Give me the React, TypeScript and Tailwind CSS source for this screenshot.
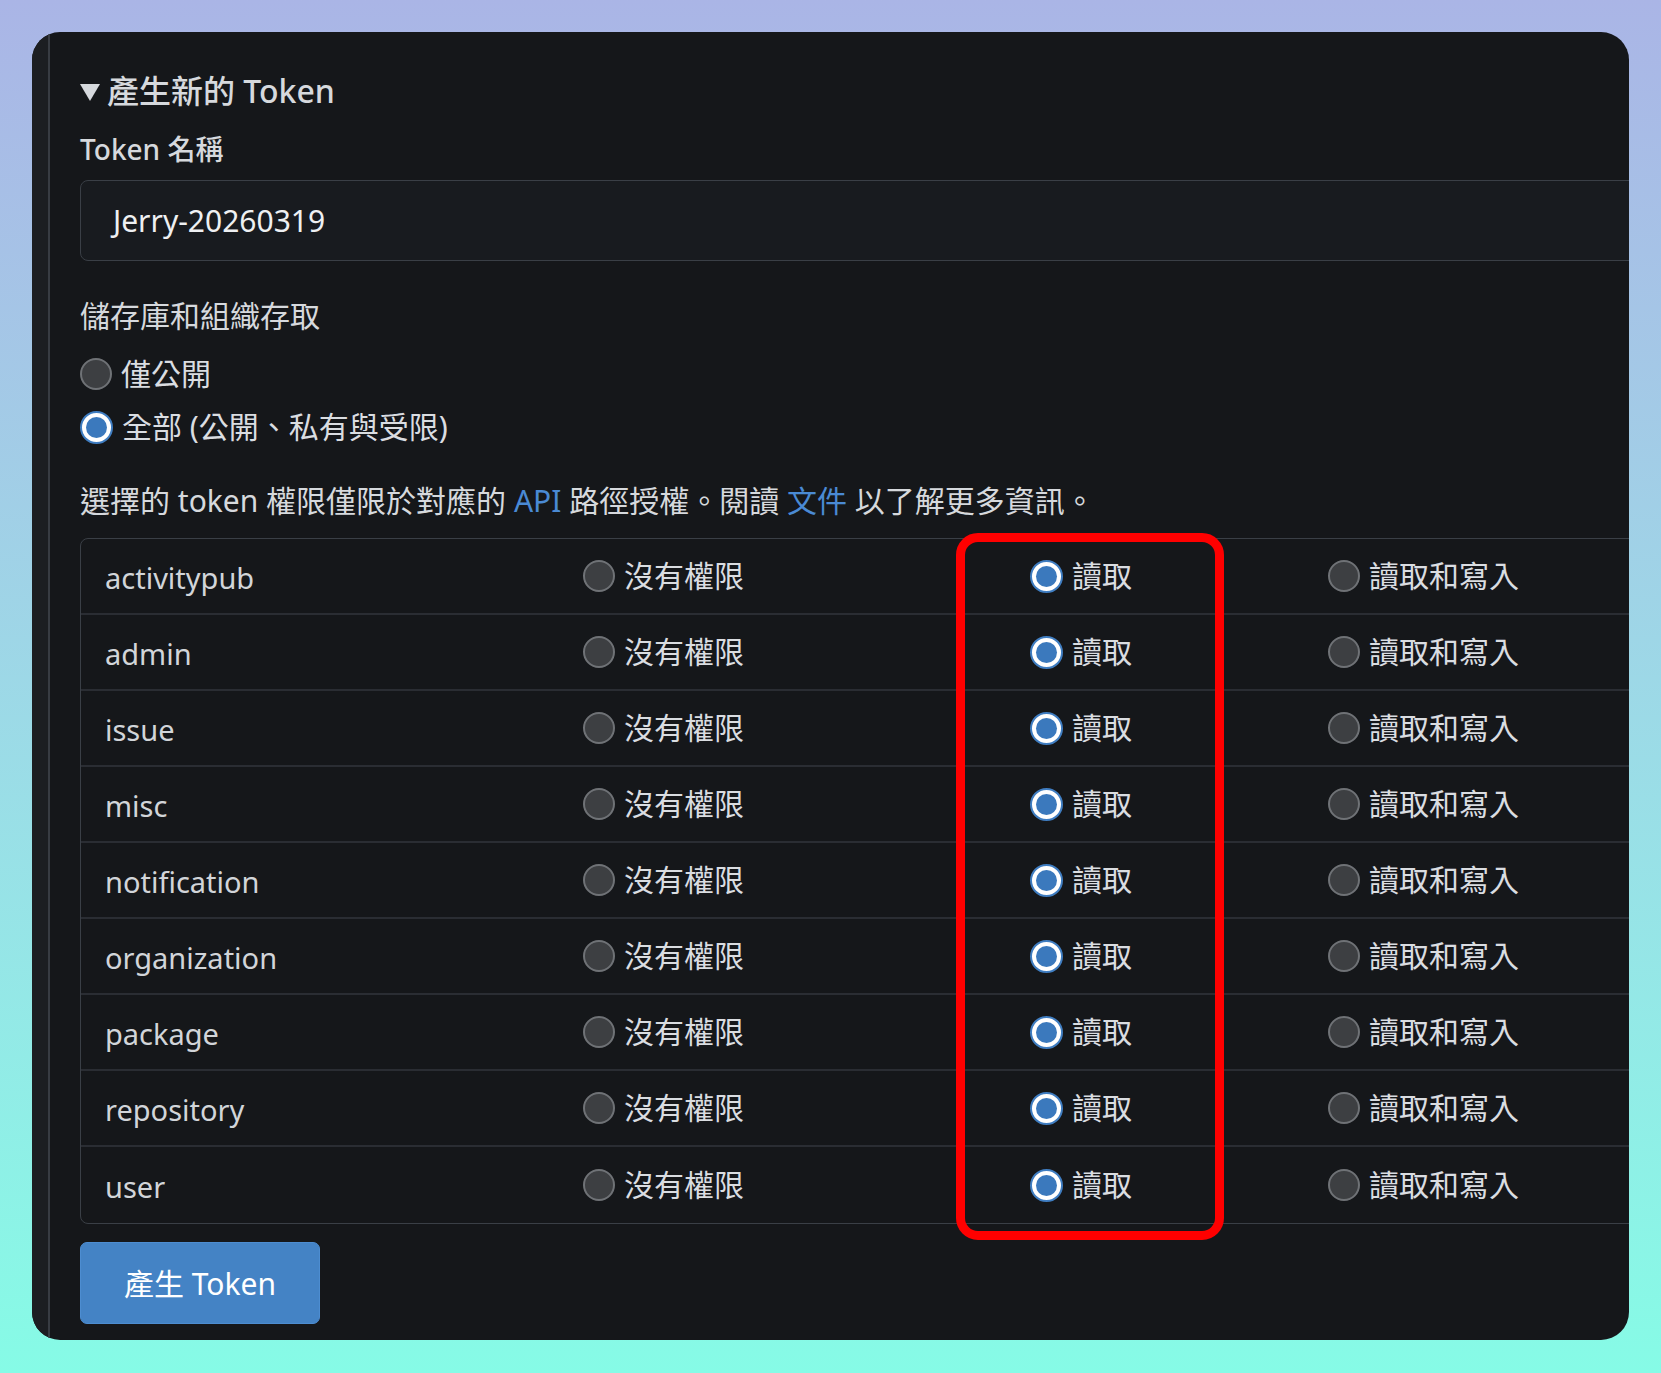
import React from "react";

type Level = "none" | "read" | "write";

const SCOPES: { name: string; level: Level }[] = [
  { name: "activitypub", level: "read" },
  { name: "admin", level: "read" },
  { name: "issue", level: "read" },
  { name: "misc", level: "read" },
  { name: "notification", level: "read" },
  { name: "organization", level: "read" },
  { name: "package", level: "read" },
  { name: "repository", level: "read" },
  { name: "user", level: "read" },
];

const FONT = "font-['Noto_Sans','Noto_Sans_CJK_TC',sans-serif]";

function Radio({ checked }: { checked: boolean }) {
  if (checked) {
    return (
      <span className="flex h-[33px] w-[33px] shrink-0 items-center justify-center rounded-full border-2 border-[#3f7dc1] bg-white">
        <span className="h-[21px] w-[21px] rounded-full bg-[#3b79bd]" />
      </span>
    );
  }
  return <span className="h-[32px] w-[32px] shrink-0 rounded-full border-2 border-[#6f7276] bg-[#3d3f42]" />;
}

function RadioLabel({ checked, label }: { checked: boolean; label: string }) {
  return (
    <label className="flex items-center gap-[9px] text-[30px] leading-[40px] text-[#dadde1]">
      <Radio checked={checked} />
      <span>{label}</span>
    </label>
  );
}

export default function App() {
  return (
    <div className={`min-h-[1373px] w-full bg-gradient-to-b from-[#aab5e6] to-[#86fbe6] pt-8 ${FONT}`}>
      <div className="relative ml-8 flex h-[1308px] w-[1597px] overflow-hidden rounded-[28px] bg-[#15171a]">
        {/* sidebar edge */}
        <div className="w-[18px] shrink-0 border-r-2 border-[#383c43] bg-[#1c1e22]" />

        <div className="w-[1720px] shrink-0 pl-[30px] pt-[37px]">
          <div className="flex h-[44px] items-center gap-[7px] text-[32px] font-medium text-[#d6d9dd]">
            <svg width="20" height="17" viewBox="0 0 20 17" className="mt-[2px]">
              <path d="M0 0 H20 L10 17 Z" fill="#d6d9dd" />
            </svg>
            <span>產生新的 Token</span>
          </div>

          <div className="mt-[16px] text-[28px] font-medium leading-[40px] text-[#d6d9dd]">Token 名稱</div>

          <div className="mt-[11px] flex h-[81px] items-center rounded-[8px] border-[1.5px] border-[#3a3f46] bg-[#181b1f] pl-[32px] text-[30px] text-[#eef0f2]">
            Jerry-20260319
          </div>

          <div className="mt-[35px] text-[30px] leading-[40px] text-[#d6d9dd]">儲存庫和組織存取</div>

          <div className="mt-[18px]">
            <RadioLabel checked={false} label="僅公開" />
          </div>
          <div className="mt-[13px]">
            <RadioLabel checked label="全部 (公開、私有與受限)" />
          </div>

          <p className="mt-[34px] text-[30px] leading-[40px] text-[#d6d9dd]">
            選擇的 token 權限僅限於對應的 <span className="text-[#4a8ad4]">API</span> 路徑授權。閱讀{" "}
            <span className="text-[#4a8ad4]">文件</span> 以了解更多資訊。
          </p>

          <div className="mt-[17px] overflow-hidden rounded-[8px] border border-[#3a3f46]">
            {SCOPES.map((s, i) => (
              <div
                key={s.name}
                className={`grid h-[76px] grid-cols-[502px_447px_298px_1fr] items-center ${
                  i < SCOPES.length - 1 ? "border-b-2 border-[#2a2d33]" : ""
                }`}
              >
                <div className="pl-[24px] pt-[3px] text-[29px] text-[#d2d5d9]">{s.name}</div>
                <RadioLabel checked={s.level === "none"} label="沒有權限" />
                <RadioLabel checked={s.level === "read"} label="讀取" />
                <RadioLabel checked={s.level === "write"} label="讀取和寫入" />
              </div>
            ))}
          </div>

          <button className="mt-[18px] flex h-[82px] w-[240px] items-center justify-center rounded-[7px] border border-[#4d8dd1] bg-[#4483c5] text-[30px] text-white">
            產生 Token
          </button>
        </div>

        {/* annotation */}
        <div className="pointer-events-none absolute left-[924px] top-[501px] h-[707px] w-[268px] rounded-[22px] border-[9px] border-[#ff0000]" />
      </div>
    </div>
  );
}
